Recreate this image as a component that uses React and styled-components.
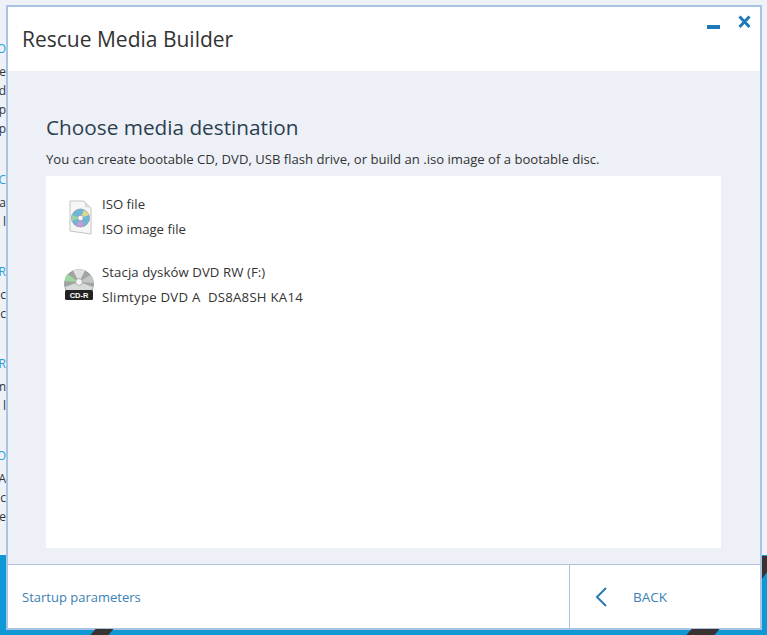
import styled, { createGlobalStyle } from 'styled-components';

const GlobalStyle = createGlobalStyle`
    html, body {
        margin: 0;
        padding: 0;
    }
    body {
        font-family: "Open Sans", "Noto Sans", "Liberation Sans", sans-serif;
    }
`
const Desktop = styled.div`
    position: relative;
    display: grid;
    grid-template-columns: 6px 1fr 6px;
    grid-template-rows: 6px 1fr 6px;
    width: 767px;
    height: 635px;
    overflow: hidden;
    background: linear-gradient(#eef2f8 0, #eef2f8 555px, #0f98d6 555px);
`
const Stripe = styled.span`
    position: absolute;
    bottom: 0;
    left: ${ ( { $left } ) => $left }px;
    width: ${ ( { $width } ) => $width }px;
    height: 6px;
    background: #3a3230;
    transform: skewX(-40deg);
`
const CornerStripe = styled.span`
    position: absolute;
    top: 556px;
    right: 0;
    width: 5px;
    height: 23px;
    background: #3a3230;
    clip-path: polygon(0 0, 100% 0, 100% 70%, 0 100%);
`
const Gutter = styled.div`
    grid-column: 1;
    grid-row: 2;
    overflow: hidden;
    display: flex;
    flex-direction: column;
    align-items: flex-end;
    padding-top: 33px;
`
const BehindLine = styled.div`
    flex: none;
    height: 19px;
    margin-top: ${ ( { $gap } ) => $gap || 0 }px;
    font-size: 12px;
    line-height: 19px;
    color: ${ ( { $link } ) => $link ? '#2f9fd8' : '#333' };
`
const Window = styled.div`
    grid-column: 2;
    grid-row: 2;
    display: flex;
    flex-direction: column;
    min-height: 0;
    background: #edf0f6;
    border: 2px solid #a9c3e3;
    margin: -1px -1px -1px 0;
`
const Header = styled.div`
    flex: none;
    display: flex;
    align-items: flex-start;
    justify-content: space-between;
    height: 64px;
    background: #fff;
`
const Title = styled.h1`
    margin: 17px 0 0 14px;
    font-size: 21px;
    font-weight: 400;
    line-height: 30px;
    color: #333;
`
const WindowControls = styled.div`
    display: flex;
    align-items: flex-start;
    gap: 18px;
    margin: 8px 9px 0 0;
`
const ControlIcon = styled.svg`
    display: block;
    width: 13px;
    height: 14px;
    stroke: #1f78b8;
    stroke-width: 3;
    fill: none;
`
const Body = styled.div`
    flex: 1;
    min-height: 0;
    display: flex;
    flex-direction: column;
    padding: 41px 39px 16px 38px;
`
const Heading = styled.h2`
    margin: 0;
    font-size: 20.75px;
    font-weight: 400;
    line-height: 30px;
    color: #2b3f50;
`
const Intro = styled.p`
    margin: 8px 0;
    font-size: 13.1px;
    line-height: 18px;
    color: #333;
`
const MediaList = styled.div`
    flex: 1;
    display: flex;
    flex-direction: column;
    gap: 24px;
    padding: 19px 0 0 16px;
    background: #fff;
`
const MediaRow = styled.div`
    display: flex;
    align-items: center;
    gap: 7px;
`
const MediaIcon = styled.svg`
    display: block;
    flex: none;
    width: 33px;
    height: 36px;
`
const MediaText = styled.div`
    display: flex;
    flex-direction: column;
    gap: 6px;
    font-size: 13.2px;
    line-height: 19px;
    color: #333;
`
const MediaLine = styled.span`
    letter-spacing: ${ ( { $spacing } ) => $spacing || 0 }px;
`
const Footer = styled.div`
    flex: none;
    display: flex;
    height: 63px;
    background: #fff;
    border-top: 1px solid #afc1da;
`
const ParamsLink = styled.a`
    flex: 1;
    display: flex;
    align-items: center;
    padding-left: 14px;
    font-size: 13px;
    color: #3b7fb5;
    cursor: pointer;
`
const BackButton = styled.a`
    flex: none;
    display: flex;
    align-items: center;
    gap: 25px;
    width: 191px;
    box-sizing: border-box;
    padding-left: 25px;
    border-left: 1px solid #afc1da;
    font-size: 13.5px;
    color: #3b7fb5;
    cursor: pointer;
`

const behindLines = [
    { text: 'O', link: true },
    { text: 'e', gap: 4 },
    { text: 'd' },
    { text: 'p' },
    { text: 'p' },
    { text: 'SC', link: true, gap: 32 },
    { text: 'a', gap: 4 },
    { text: 'l' },
    { text: 'R', link: true, gap: 31 },
    { text: 'c', gap: 4 },
    { text: 'c' },
    { text: 'R', link: true, gap: 31 },
    { text: 'm', gap: 4 },
    { text: 'l' },
    { text: 'O', link: true, gap: 31 },
    { text: 'A', gap: 4 },
    { text: 'c' },
    { text: 'e' },
]

const IsoIcon = () => (
    <MediaIcon viewBox="0 0 33 36">
        <path d="M8 2h14l7 7v26l-21-3z" fill="#f6f6f4" stroke="#c4c4c4" />
        <path d="M22 2l1 6 6 1z" fill="#dcdcdc" />
        <circle cx="18.5" cy="19" r="9" fill="#6fb6d6" stroke="#6f8ea3" strokeWidth="0.6" />
        <path d="M18.5 19L27 16a9 9 0 0 0-5-5z" fill="#e2d68e" />
        <path d="M18.5 19L14 27a9 9 0 0 0 8 0z" fill="#c49ad6" />
        <path d="M18.5 19L10 22a9 9 0 0 1 0-6z" fill="#9fd0a8" />
        <circle cx="18.5" cy="19" r="2.8" fill="#f2f2f2" stroke="#7f8f99" strokeWidth="0.6" />
    </MediaIcon>
)

const CdIcon = () => (
    <MediaIcon viewBox="0 0 33 36">
        <circle cx="17" cy="17" r="14.5" fill="#a3a5a5" stroke="#777" strokeWidth="0.6" />
        <path d="M17 15L5 7a14.5 14.5 0 0 0-2.5 7z" fill="#9fd8a0" />
        <path d="M17 15L11 3.5a14.5 14.5 0 0 1 12 0z" fill="#dfe3df" />
        <path d="M17 15L31.5 16a14.5 14.5 0 0 0-3-8z" fill="#c4c6c6" />
        <path d="M17 15L3 20a14.5 14.5 0 0 0 3 5h22a14.5 14.5 0 0 0 3-5z" fill="#d9dada" />
        <circle cx="17" cy="15" r="3.4" fill="#f5f5f5" stroke="#888" strokeWidth="0.6" />
        <rect x="3" y="23" width="28" height="10" rx="1.5" fill="#222" />
        <text x="17" y="30.5" fontSize="7.5" fontWeight="700" fontFamily="Liberation Sans" textAnchor="middle" fill="#fff">CD-R</text>
    </MediaIcon>
)

const App = () => {
    return (
        <Desktop>
            <GlobalStyle />
            <Gutter>
                {behindLines.map( ( line, i ) => (
                    <BehindLine key={i} $link={line.link} $gap={line.gap}>{line.text}</BehindLine>
                ) )}
            </Gutter>
            <Window>
                <Header>
                    <Title>Rescue Media Builder</Title>
                    <WindowControls>
                        <ControlIcon viewBox="0 0 13 14"><path d="M0 12h13" strokeWidth="4" /></ControlIcon>
                        <ControlIcon viewBox="0 0 13 14"><path d="M1.5 1.5l10 10.5M11.5 1.5l-10 10.5" /></ControlIcon>
                    </WindowControls>
                </Header>
                <Body>
                    <Heading>Choose media destination</Heading>
                    <Intro>You can create bootable CD, DVD, USB flash drive, or build an .iso image of a bootable disc.</Intro>
                    <MediaList>
                        <MediaRow>
                            <IsoIcon />
                            <MediaText>
                                <span>ISO file</span>
                                <span>ISO image file</span>
                            </MediaText>
                        </MediaRow>
                        <MediaRow>
                            <CdIcon />
                            <MediaText>
                                <MediaLine $spacing={0.08}>Stacja dysków DVD RW (F:)</MediaLine>
                                <MediaLine $spacing={0.25}>Slimtype DVD A&nbsp; DS8A8SH KA14</MediaLine>
                            </MediaText>
                        </MediaRow>
                    </MediaList>
                </Body>
                <Footer>
                    <ParamsLink>Startup parameters</ParamsLink>
                    <BackButton>
                        <svg width="13" height="20" viewBox="0 0 13 20" fill="none" stroke="#2a78b5" strokeWidth="2"><path d="M11 1L2 10l9 9" /></svg>
                        BACK
                    </BackButton>
                </Footer>
            </Window>
            <Stripe $left={93} $width={18} />
            <Stripe $left={689} $width={28} />
            <CornerStripe />
        </Desktop>
    )
}
export default App;
